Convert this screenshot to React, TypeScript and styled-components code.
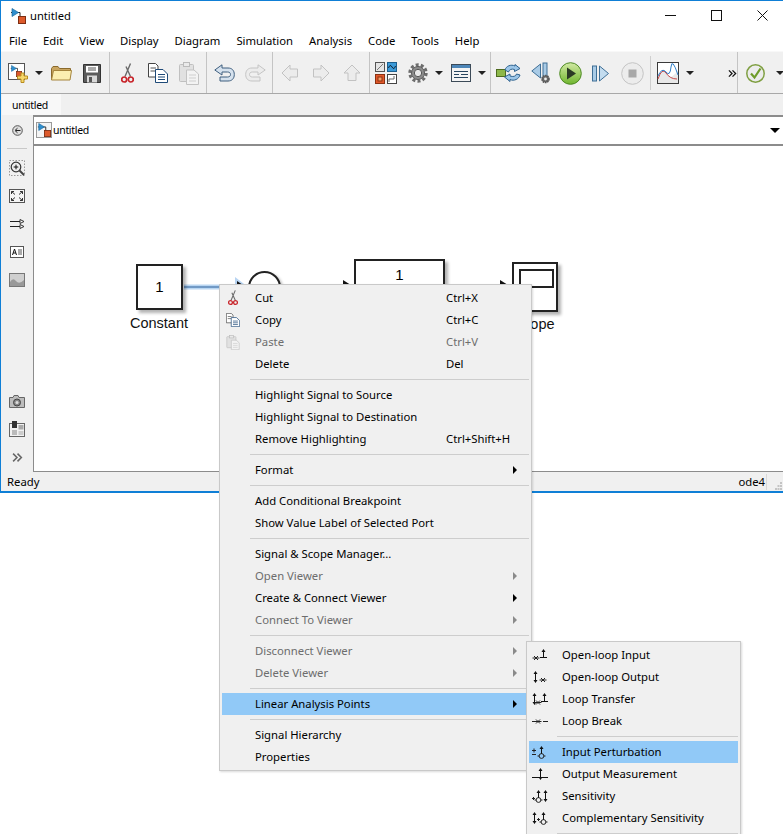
import React from 'react';
import styled, { createGlobalStyle } from 'styled-components';

const GlobalStyle = createGlobalStyle`
  html, body {
    margin: 0;
    padding: 0;
    background: #fff;
  }
  body {
    font-family: "Noto Sans", "Open Sans", sans-serif;
    font-size: 11.3px;
    color: #000;
  }
`;

/* ---------- icons ---------- */

const ModelGlyph = () => (
  <>
    <path d="M1 4.500H10M10 4.500V9" stroke="#222" fill="none" />
    <path d="M2 .5L8.500 4.500L2 8.500Z" fill="#2f8fcf" stroke="#1c6a9e" strokeWidth=".7" />
    <rect x="8.500" y="8.500" width="7" height="7" fill="#dd5a2b" stroke="#7d2d12" />
  </>
);

const ModelIcon = () => (
  <svg width="16" height="16" viewBox="0 0 16 16"><ModelGlyph /></svg>
);

const NewModelIcon = () => (
  <svg width="21" height="21" viewBox="0 0 21 21">
    <rect x=".5" y=".5" width="16" height="16" fill="#fff" stroke="#555" />
    <g transform="translate(2 2) scale(.75)"><ModelGlyph /></g>
    <path d="M13 10h3v3h3.500v3h-3.500v3.500h-3V16H9.500v-3H13Z" fill="#f6d76a" stroke="#b98c1e" />
  </svg>
);

const OpenIcon = () => (
  <svg width="21" height="15" viewBox="0 0 21 15">
    <path d="M.5 14V2.500L2 .5h5l1.500 2H19.500V5" fill="#c9a560" stroke="#8a6a2c" />
    <path d="M.5 14L2.500 4.500H20.500L19 14Z" fill="#fbeeb0" stroke="#a5843c" />
  </svg>
);

const SaveIcon = () => (
  <svg width="18" height="19" viewBox="0 0 18 19">
    <path d="M.5.5H17.500V18.500H.5Z" fill="#5b5b5b" stroke="#333" />
    <rect x="3" y="2" width="12" height="6.500" fill="#fff" />
    <path d="M5 4h8M5 6h8" stroke="#555" />
    <rect x="4" y="11.500" width="10" height="7" fill="#d8d8d8" />
    <rect x="6" y="13" width="3" height="5" fill="#555" />
  </svg>
);

const CutIcon = ({ small }: { small?: boolean }) => (
  <svg width={small ? 10 : 13} height={small ? 16 : 21} viewBox="0 0 13 21">
    <path d="M9.500.5L4 13.500M5 3.500L9.500 13.500" stroke="#6b6b6b" strokeWidth="1.400" fill="none" />
    <circle cx="3.200" cy="16.500" r="2.500" fill="none" stroke="#c8242a" strokeWidth="1.700" />
    <circle cx="9.800" cy="16.500" r="2.500" fill="none" stroke="#c8242a" strokeWidth="1.700" />
  </svg>
);

const CopyIcon = ({ small }: { small?: boolean }) => (
  <svg width={small ? 14 : 20} height={small ? 14 : 20} viewBox="0 0 20 20">
    <path d="M.5.5H7.500L10 3V14H.5Z" fill="#fff" stroke="#444" />
    <path d="M2.500 5H8M2.500 8H8" stroke="#555" />
    <path d="M7.500 6.500H15L19.500 11V19.500H7.500Z" fill="#fff" stroke="#1f4a78" />
    <path d="M10 11.500H17M10 14H17M10 16.500H17" stroke="#1f4a78" />
  </svg>
);

const PasteIcon = ({ small }: { small?: boolean }) => (
  <svg width={small ? 14 : 20} height={small ? 15 : 23} viewBox="0 0 20 23" opacity=".75">
    <rect x=".5" y="2.500" width="14" height="17" rx="1" fill="#dcdcdc" stroke="#b0b0b0" />
    <rect x="4.500" y=".5" width="6" height="4" fill="#e8e8e8" stroke="#aaa" />
    <path d="M7.500 8H15L19.500 12V22.500H7.500Z" fill="#f4f4f4" stroke="#b4b4b4" />
    <path d="M10 13H17M10 16H17M10 19H17" stroke="#c4c4c4" />
  </svg>
);

const UndoIcon = ({ off }: { off?: boolean }) => (
  <svg width="21" height="18" viewBox="0 0 21 18" style={off ? { transform: 'scaleX(-1)' } : undefined}>
    <path
      d="M8 .8L.8 6L8 11V8H13.500C15.500 8 16.500 9 16.500 10.500C16.500 12 15.500 13 13.500 13H6V17H14C18 17 20.300 14.500 20.300 10.500C20.300 6.500 18 4 14 4H8Z"
      fill={off ? '#ececec' : '#d5e1ed'}
      stroke={off ? '#c4c4c4' : '#3f5f7f'}
    />
  </svg>
);

const NavArrow = ({ turn }: { turn: number }) => (
  <svg width="18" height="18" viewBox="0 0 18 18" style={{ transform: `rotate(${turn}deg)` }}>
    <path d="M9 1L1 9H5V16.500H13V9H17Z" fill="#ececec" stroke="#c2c2c2" />
  </svg>
);

const LibraryIcon = () => (
  <svg width="22" height="22" viewBox="0 0 22 22">
    <rect x=".5" y=".5" width="9" height="9" fill="#e4e4e4" stroke="#555" />
    <path d="M2 8L8 2" stroke="#777" />
    <rect x="12.500" y=".5" width="9" height="9" fill="#3a9ad9" stroke="#1c5f8e" />
    <path d="M13.500 6Q15 1.500 17 5T20.500 4" stroke="#123" fill="none" />
    <rect x=".5" y="12.500" width="9" height="9" fill="#e2582a" stroke="#8a3212" />
    <rect x="3" y="15" width="4" height="4" fill="#f4a06a" stroke="#8a3212" />
    <rect x="12.500" y="12.500" width="9" height="9" fill="#fff" stroke="#444" />
    <path d="M14 20V17H19V14" stroke="#666" fill="none" />
  </svg>
);

const GearIcon = () => (
  <svg width="20" height="20" viewBox="0 0 20 20">
    <circle cx="10" cy="10" r="8.200" fill="none" stroke="#6d6d6d" strokeWidth="3" strokeDasharray="3 2.150" />
    <circle cx="10" cy="10" r="6.500" fill="#8e8e8e" stroke="#555" />
    <circle cx="10" cy="10" r="3.700" fill="#e8e8e8" stroke="#555" />
  </svg>
);

const ExplorerIcon = () => (
  <svg width="20" height="18" viewBox="0 0 20 18">
    <rect x=".5" y=".5" width="19" height="17" fill="#f4f4f4" stroke="#3c4a58" />
    <rect x="1" y="1" width="18" height="3" fill="#4d86b8" />
    <path d="M3 7.500H17M3 10.500H8M10 10.500H17M3 13.500H17" stroke="#27455f" />
  </svg>
);

const UpdateIcon = () => (
  <svg width="25" height="18" viewBox="0 0 25 18">
    <rect x=".5" y="5.500" width="9" height="7" fill="#8db84a" stroke="#4e6b1f" />
    <path d="M9 6C10 2 15 0 19 2V.5L24 4.500L18.500 7.500V5.500C16 4.500 13 5.500 12.500 8Z" fill="#9cc6e8" stroke="#2d628f" />
    <path d="M24 11C23 15 18 17.500 14 15.500V17.500L8.500 13L14 10V12C17 13 20 12.500 20.500 10Z" fill="#9cc6e8" stroke="#2d628f" />
  </svg>
);

const StepBackIcon = () => (
  <svg width="20" height="22" viewBox="0 0 20 22">
    <path d="M9.500 2V16L.8 9Z" fill="#a9cbe6" stroke="#3f6f96" />
    <rect x="12" y="1" width="4" height="14" fill="#a9cbe6" stroke="#3f6f96" />
    <circle cx="14.500" cy="17" r="3.600" fill="#666" stroke="#555" strokeDasharray="1.500 .8" strokeWidth="1.400" />
    <circle cx="14.500" cy="17" r="1.400" fill="#eee" />
  </svg>
);

const PlayIcon = () => (
  <svg width="23" height="23" viewBox="0 0 23 23">
    <defs>
      <linearGradient id="playFill" x1="0" y1="0" x2="0" y2="1">
        <stop offset="0" stopColor="#d3eaa5" />
        <stop offset="1" stopColor="#6fb52e" />
      </linearGradient>
    </defs>
    <circle cx="11.500" cy="11.500" r="10.800" fill="url(#playFill)" stroke="#4e8a25" />
    <path d="M8 5.500L17 11.500L8 17.500Z" fill="#2b3a25" />
  </svg>
);

const StepForwardIcon = () => (
  <svg width="17" height="17" viewBox="0 0 17 17">
    <rect x=".5" y="1" width="4" height="15" fill="#a9cbe6" stroke="#3f6f96" />
    <path d="M7.500 1V16L16.500 8.500Z" fill="#c3dcef" stroke="#3f6f96" />
  </svg>
);

const StopIcon = () => (
  <svg width="23" height="23" viewBox="0 0 23 23">
    <circle cx="11.500" cy="11.500" r="10.800" fill="#ececec" stroke="#c4c4c4" />
    <rect x="7.500" y="7.500" width="8" height="8" fill="#a8a8a8" />
  </svg>
);

const ScopeIcon = () => (
  <svg width="22" height="22" viewBox="0 0 22 22">
    <rect x=".5" y=".5" width="21" height="21" fill="#fff" stroke="#3a3a3a" />
    <path d="M1 16Q5 5 9 10T14 15T21 9V21H1Z" fill="#e8e8e8" />
    <path d="M1 17Q5 5 9 11T20 17" fill="none" stroke="#c84a4a" />
    <path d="M1 14Q5 5 9 10T14 5T21 13" fill="none" stroke="#2f7fc9" />
  </svg>
);

const CheckIcon = () => (
  <svg width="19" height="19" viewBox="0 0 19 19">
    <circle cx="9.500" cy="9.500" r="8.700" fill="#ececec" stroke="#7f9f42" strokeWidth="1.500" />
    <path d="M5 9.500L8.500 13.500L14.500 4.500" fill="none" stroke="#6e9c2a" strokeWidth="2.200" />
  </svg>
);

const ChevronsIcon = ({ color, size }: { color: string; size: number }) => (
  <svg width={size} height={size} viewBox="0 0 10 10">
    <path d="M1 1.500L4.500 5L1 8.500M5 1.500L8.500 5L5 8.500" fill="none" stroke={color} strokeWidth="1.400" />
  </svg>
);

const BackCircleIcon = () => (
  <svg width="11" height="11" viewBox="0 0 11 11">
    <circle cx="5.500" cy="5.500" r="4.800" fill="#ddd" stroke="#555" />
    <path d="M8.500 5.500H4M5.500 3.200L3 5.500L5.500 7.800" fill="none" stroke="#222" />
  </svg>
);

const ZoomIcon = () => (
  <svg width="16" height="16" viewBox="0 0 16 16">
    <rect x=".5" y=".5" width="15" height="15" fill="none" stroke="#999" strokeDasharray="1.500 1.500" />
    <circle cx="7" cy="7" r="4.800" fill="#eee" stroke="#333" strokeWidth="1.200" />
    <path d="M4.700 7H9.300M7 4.700V9.300" stroke="#111" />
    <path d="M10.500 10.500L15 15" stroke="#444" strokeWidth="2" />
  </svg>
);

const FitIcon = () => (
  <svg width="16" height="14" viewBox="0 0 16 14">
    <rect x=".5" y=".5" width="15" height="13" fill="#f4f4f4" stroke="#555" />
    <path d="M2.500 2.500L6 5.500M2.500 2.500H5M2.500 2.500V5M13.500 2.500L10 5.500M13.500 2.500H11M13.500 2.500V5M2.500 11.500L6 8.500M2.500 11.500H5M2.500 11.500V9M13.500 11.500L10 8.500M13.500 11.500H11M13.500 11.500V9" stroke="#333" fill="none" />
  </svg>
);

const PortsIcon = () => (
  <svg width="15" height="10" viewBox="0 0 15 10">
    <path d="M0 2.500H10M0 7.500H10" stroke="#222" />
    <path d="M10 .5L14 2.500L10 4.500ZM10 5.500L14 7.500L10 9.500Z" fill="#fff" stroke="#333" />
  </svg>
);

const AnnotationIcon = () => (
  <svg width="14" height="12" viewBox="0 0 14 12">
    <rect x=".5" y=".5" width="13" height="11" fill="#fff" stroke="#555" />
    <path d="M2.500 9L4.500 3L6.500 9M3.200 7H5.800" fill="none" stroke="#111" />
    <path d="M8 4H12M8 6H12M8 8H12" stroke="#555" />
  </svg>
);

const ImageIcon = () => (
  <svg width="16" height="14" viewBox="0 0 16 14">
    <rect x=".5" y=".5" width="15" height="13" fill="#cfcfcf" stroke="#777" />
    <path d="M1 9Q4 4 7 8T15 7V13H1Z" fill="#999" />
  </svg>
);

const CameraIcon = () => (
  <svg width="16" height="13" viewBox="0 0 16 13">
    <path d="M.5 2.500H4L5 .5H9L10 2.500H15.500V12.500H.5Z" fill="#bdbdbd" stroke="#666" />
    <circle cx="8" cy="7.500" r="3.500" fill="#888" stroke="#444" />
    <circle cx="8" cy="7.500" r="1.500" fill="#ddd" />
  </svg>
);

const PropsIcon = () => (
  <svg width="16" height="16" viewBox="0 0 16 16">
    <rect x=".5" y="2.500" width="15" height="13" fill="#f2f2f2" stroke="#666" />
    <rect x="3" y="0" width="5" height="7" fill="#333" />
    <rect x="3" y="9" width="5" height="5" fill="#bbb" />
    <rect x="9.500" y="4" width="5" height="4.500" fill="#aaa" />
    <rect x="9.500" y="10" width="5" height="4" fill="#ccc" />
  </svg>
);

/* little signal glyphs of the Linear Analysis Points submenu */
const Cross = ({ x, y }: { x: number; y: number }) => (
  <path d={`M${x - 3.500} ${y}h7M${x - 2} ${y - 2}l4 4M${x + 2} ${y - 2}l-4 4`} stroke="#222" fill="none" />
);
const ArrowTee = ({ x }: { x: number }) => (
  <>
    <path d={`M${x - 3.500} 9.500h7M${x} 3v7`} stroke="#111" fill="none" />
    <path d={`M${x - 2} 4L${x} 1L${x + 2} 4Z`} fill="#111" />
  </>
);
const UpDown = ({ x }: { x: number }) => (
  <>
    <path d={`M${x} 3v8`} stroke="#111" />
    <path d={`M${x - 2} 4L${x} 1L${x + 2} 4ZM${x - 2} 10L${x} 13L${x + 2} 10Z`} fill="#111" />
  </>
);
const SumMark = ({ x }: { x: number }) => (
  <>
    <path d={`M${x} 3v6`} stroke="#111" />
    <path d={`M${x - 2} 4L${x} 1L${x + 2} 4Z`} fill="#111" />
    <circle cx={x} cy="11" r="2.400" fill="none" stroke="#222" />
    <path d={`M${x - 4} 11h1.500M${x + 2.500} 11h1.500`} stroke="#222" />
  </>
);

const POINT_ICONS: Record<string, React.ReactNode> = {
  input: (<><Cross x={4} y={10} /><ArrowTee x={11.500} /></>),
  output: (<><UpDown x={3.500} /><Cross x={11} y={10} /></>),
  transfer: (<><UpDown x={2.500} /><Cross x={6} y={10.500} /><ArrowTee x={12.500} /></>),
  loopBreak: (<><path d="M0 7.500H3M11 7.500H16" stroke="#222" /><Cross x={6} y={7.500} /></>),
  perturb: (<><path d="M0 5.500h4M2 3.500v4M0 9.500h4" stroke="#222" /><SumMark x={9.500} /></>),
  measure: (<><path d="M0 10.500H16" stroke="#111" /><UpDown x={8.500} /></>),
  sensitivity: (<><path d="M0 9.500h3M1.500 8v3" stroke="#222" /><SumMark x={6.500} /><UpDown x={13.500} /></>),
  complementary: (<><UpDown x={2.500} /><path d="M5 8.500h3M6.500 7v3" stroke="#222" /><SumMark x={11.500} /></>),
};

const PointIcon = ({ name }: { name: string }) => (
  <svg width="16" height="14" viewBox="0 0 16 14">{POINT_ICONS[name]}</svg>
);

/* ---------- window chrome ---------- */

const Page = styled.div`
  position: relative;
  width: 783px;
  height: 834px;
  overflow: hidden;
  background: #fff;
`;

const Window = styled.div`
  width: 783px;
  height: 493px;
  box-sizing: border-box;
  border-top: 1px solid #0f7fd6;
  border-left: 1px solid #0f7fd6;
  border-bottom: 2px solid #0f7fd6;
  display: flex;
  flex-direction: column;
`;

const TitleBar = styled.div`
  height: 29px;
  display: flex;
  align-items: center;
  padding: 0 0 0 9px;
  margin-right: -2px;
  background: #fff;
`;

const TitleText = styled.span`
  flex: 1;
  margin-left: 4px;
  font-size: 11.2px;
`;

const WinButton = styled.div`
  width: 46px;
  height: 29px;
  display: flex;
  align-items: center;
  justify-content: center;
`;

const MenuBar = styled.div`
  height: 21px;
  display: flex;
  align-items: center;
  padding-left: 8px;
  gap: 16px;
  background: #fff;
`;

const Toolbar = styled.div`
  height: 40px;
  padding-top: 1px;
  flex: none;
  display: flex;
  background: #f0f0f0;
  border-top: 1px solid #f8f8f8;
  border-bottom: 1px solid #a8a8a8;
`;

const ToolGroup = styled.div<{ $width: number }>`
  width: ${(p) => p.$width}px;
  flex: none;
  display: flex;
  align-items: center;
  margin-top: -1px;
  padding-top: 1px;
  border-right: 1px solid #c4c4c4;
  box-sizing: content-box;
`;

const Tool = styled.div<{ $width: number }>`
  width: ${(p) => p.$width}px;
  flex: none;
  height: 100%;
  display: flex;
  align-items: center;
  justify-content: center;
`;

const InnerDivider = styled.div`
  width: 1px;
  height: 34px;
  background: #cfcfcf;
  flex: none;
`;

const DropArrow = styled.div`
  width: 0;
  height: 0;
  border-left: 4px solid transparent;
  border-right: 4px solid transparent;
  border-top: 4px solid #222;
`;

const TabRow = styled.div`
  height: 21px;
  flex: none;
  background: #f0f0f0;
  display: flex;
`;

const Tab = styled.div`
  width: 59px;
  margin-left: 1px;
  padding-left: 10px;
  box-sizing: border-box;
  background: #f8f8f8;
  display: flex;
  align-items: center;
  font-size: 10.5px;
  letter-spacing: -0.3px;
`;

const Body = styled.div`
  flex: 1;
  display: flex;
  min-height: 0;
`;

const SideBar = styled.div`
  width: 32px;
  flex: none;
  background: #f0f0f0;
  display: flex;
  flex-direction: column;
  align-items: center;
  padding: 1px 0;
  box-sizing: border-box;
`;

const SideButton = styled.div`
  width: 32px;
  height: 28px;
  flex: none;
  display: flex;
  align-items: center;
  justify-content: center;
`;

const SideDivider = styled.div`
  width: 20px;
  height: 1px;
  flex: none;
  margin: 4px 0 5px;
  background: #c8c8c8;
`;

const SideSpacer = styled.div`
  flex: 1;
`;

const Main = styled.div`
  flex: 1;
  min-width: 0;
  display: flex;
  flex-direction: column;
  border-left: 1px solid #8c8c8c;
  border-bottom: 1px solid #8c8c8c;
`;

const AddressBar = styled.div`
  height: 26px;
  flex: none;
  display: flex;
  align-items: center;
  padding: 0 3px 1px 2px;
  gap: 1px;
  background: #fff;
  border-top: 2px solid #8c8c8c;
  border-bottom: 2px solid #8c8c8c;
`;

const AddressIcon = styled.div`
  width: 16px;
  height: 16px;
  box-sizing: border-box;
  display: flex;
  border: 1px solid #9a9a9a;
  background: #f4f4f4;

  svg {
    width: 14px;
    height: 14px;
  }
`;

const AddressText = styled.span`
  flex: 1;
  font-size: 10.5px;
  letter-spacing: -0.3px;
`;

const AddressArrow = styled.div`
  width: 0;
  height: 0;
  border-left: 5px solid transparent;
  border-right: 5px solid transparent;
  border-top: 5px solid #000;
`;

const StatusBar = styled.div`
  height: 19px;
  flex: none;
  display: flex;
  align-items: center;
  background: #f0f0f0;
  padding-left: 6px;
`;

const StatusText = styled.span`
  flex: 1;
`;

const StatusCell = styled.span`
  padding-right: 1px;
  border-right: 1px solid #d8d8d8;
  line-height: 16px;
`;

const Grip = styled.div`
  width: 16px;
  height: 17px;
  flex: none;
  display: flex;
  justify-content: flex-end;
  align-items: flex-end;
`;

/* ---------- model canvas ---------- */

const Canvas = styled.div`
  position: relative;
  flex: 1;
  background: #fff;
  font-family: "Liberation Sans", Arial, sans-serif;
`;

const Wires = styled.svg`
  position: absolute;
  left: 0;
  top: 0;
`;

const Block = styled.div<{ $x: number; $y: number; $w: number; $h: number; $top?: boolean }>`
  position: absolute;
  left: ${(p) => p.$x}px;
  top: ${(p) => p.$y}px;
  width: ${(p) => p.$w}px;
  height: ${(p) => p.$h}px;
  box-sizing: border-box;
  border: 2px solid #222;
  background: #fff;
  box-shadow: 3px 3px 3px rgba(0, 0, 0, 0.3);
  display: flex;
  justify-content: center;
  align-items: ${(p) => (p.$top ? 'flex-start' : 'center')};
  padding-top: ${(p) => (p.$top ? 5 : 0)}px;
  font-size: 15px;
  line-height: 18px;
`;

const ScopeScreen = styled.div`
  position: absolute;
  left: 5px;
  top: 5px;
  width: 35px;
  height: 19px;
  box-sizing: border-box;
  border: 2px solid #222;
`;

const SumCircle = styled.div`
  position: absolute;
  left: 214px;
  top: 125px;
  width: 33px;
  height: 33px;
  box-sizing: border-box;
  border: 2px solid #222;
  border-radius: 50%;
  background: #fff;
  box-shadow: 2px 2px 3px rgba(0, 0, 0, 0.3);
`;

const BlockLabel = styled.div<{ $x: number; $y: number }>`
  position: absolute;
  left: ${(p) => p.$x}px;
  top: ${(p) => p.$y}px;
  width: 80px;
  text-align: center;
  font-size: 14.500px;
  line-height: 18px;
  color: #111;
`;

/* ---------- context menus ---------- */

const PopupMenu = styled.div<{ $x: number; $y: number; $w: number }>`
  position: absolute;
  left: ${(p) => p.$x}px;
  top: ${(p) => p.$y}px;
  width: ${(p) => p.$w}px;
  box-sizing: border-box;
  padding: 2px;
  background: #f0f0f0;
  border: 1px solid #c9c9c9;
  box-shadow: 1px 1px 2px rgba(0, 0, 0, 0.15);
`;

const MenuRow = styled.div<{ $active?: boolean; $off?: boolean; $indent: number }>`
  position: relative;
  height: 22px;
  box-sizing: border-box;
  display: flex;
  align-items: center;
  padding: 0 0 2px ${(p) => p.$indent}px;
  color: ${(p) => (p.$off ? '#6d6d6d' : '#000')};
  background: ${(p) => (p.$active ? '#91c9f7' : 'transparent')};
`;

const MenuIcon = styled.div`
  position: absolute;
  left: 0;
  top: 0;
  width: 22px;
  height: 22px;
  display: flex;
  align-items: center;
  justify-content: center;
`;

const MenuLabel = styled.span`
  width: 191px;
  flex: none;
  white-space: nowrap;
`;

const SubArrow = styled.div<{ $off?: boolean }>`
  position: absolute;
  right: 12px;
  top: 7px;
  width: 0;
  height: 0;
  border-top: 4px solid transparent;
  border-bottom: 4px solid transparent;
  border-left: 4px solid ${(p) => (p.$off ? '#8a8a8a' : '#000')};
`;

const MenuSeparator = styled.div<{ $indent: number }>`
  height: 1px;
  margin: 4px 0 4px ${(p) => p.$indent}px;
  background: #cdcdcd;
`;

type Item = {
  label?: string;
  shortcut?: string;
  off?: boolean;
  sub?: boolean;
  active?: boolean;
  icon?: React.ReactNode;
};

const CONTEXT_ITEMS: Item[] = [
  { label: 'Cut', shortcut: 'Ctrl+X', icon: <CutIcon small /> },
  { label: 'Copy', shortcut: 'Ctrl+C', icon: <CopyIcon small /> },
  { label: 'Paste', shortcut: 'Ctrl+V', off: true, icon: <PasteIcon small /> },
  { label: 'Delete', shortcut: 'Del' },
  {},
  { label: 'Highlight Signal to Source' },
  { label: 'Highlight Signal to Destination' },
  { label: 'Remove Highlighting', shortcut: 'Ctrl+Shift+H' },
  {},
  { label: 'Format', sub: true },
  {},
  { label: 'Add Conditional Breakpoint' },
  { label: 'Show Value Label of Selected Port' },
  {},
  { label: 'Signal & Scope Manager...' },
  { label: 'Open Viewer', off: true, sub: true },
  { label: 'Create & Connect Viewer', sub: true },
  { label: 'Connect To Viewer', off: true, sub: true },
  {},
  { label: 'Disconnect Viewer', off: true, sub: true },
  { label: 'Delete Viewer', off: true, sub: true },
  {},
  { label: 'Linear Analysis Points', sub: true, active: true },
  {},
  { label: 'Signal Hierarchy' },
  { label: 'Properties' },
];

const POINT_ITEMS: Item[] = [
  { label: 'Open-loop Input', icon: <PointIcon name="input" /> },
  { label: 'Open-loop Output', icon: <PointIcon name="output" /> },
  { label: 'Loop Transfer', icon: <PointIcon name="transfer" /> },
  { label: 'Loop Break', icon: <PointIcon name="loopBreak" /> },
  {},
  { label: 'Input Perturbation', active: true, icon: <PointIcon name="perturb" /> },
  { label: 'Output Measurement', icon: <PointIcon name="measure" /> },
  { label: 'Sensitivity', icon: <PointIcon name="sensitivity" /> },
  { label: 'Complementary Sensitivity', icon: <PointIcon name="complementary" /> },
  {},
];

const MENU_BAR = ['File', 'Edit', 'View', 'Display', 'Diagram', 'Simulation', 'Analysis', 'Code', 'Tools', 'Help'];

const MenuItems = ({ items, indent }: { items: Item[]; indent: number }) => (
  <>
    {items.map((item, i) =>
      item.label ? (
        <MenuRow key={i} $active={item.active} $off={item.off} $indent={indent}>
          {item.icon && <MenuIcon>{item.icon}</MenuIcon>}
          <MenuLabel>{item.label}</MenuLabel>
          {item.shortcut && <span>{item.shortcut}</span>}
          {item.sub && <SubArrow $off={item.off} />}
        </MenuRow>
      ) : (
        <MenuSeparator key={i} $indent={indent - 5} />
      )
    )}
  </>
);

export default function App() {
  return (
    <Page>
      <GlobalStyle />
      <Window>
        <TitleBar>
          <ModelIcon />
          <TitleText>untitled</TitleText>
          <WinButton>
            <svg width="11" height="11" viewBox="0 0 11 11"><path d="M0 5.500H11" stroke="#111" /></svg>
          </WinButton>
          <WinButton>
            <svg width="11" height="11" viewBox="0 0 11 11"><rect x=".5" y=".5" width="10" height="10" fill="none" stroke="#111" /></svg>
          </WinButton>
          <WinButton>
            <svg width="11" height="11" viewBox="0 0 11 11"><path d="M.5.5L10.500 10.500M10.500.5L.5 10.500" stroke="#111" /></svg>
          </WinButton>
        </TitleBar>
        <MenuBar>
          {MENU_BAR.map((m) => <span key={m}>{m}</span>)}
        </MenuBar>
        <Toolbar>
          <ToolGroup $width={108}>
            <Tool $width={34}><NewModelIcon /></Tool>
            <Tool $width={8}><DropArrow /></Tool>
            <Tool $width={36}><OpenIcon /></Tool>
            <Tool $width={26}><SaveIcon /></Tool>
          </ToolGroup>
          <ToolGroup $width={96}>
            <Tool $width={34}><CutIcon /></Tool>
            <Tool $width={28}><CopyIcon /></Tool>
            <Tool $width={34}><PasteIcon /></Tool>
          </ToolGroup>
          <ToolGroup $width={65}>
            <Tool $width={34}><UndoIcon /></Tool>
            <Tool $width={28}><UndoIcon off /></Tool>
          </ToolGroup>
          <ToolGroup $width={96}>
            <Tool $width={34}><NavArrow turn={-90} /></Tool>
            <Tool $width={28}><NavArrow turn={90} /></Tool>
            <Tool $width={34}><NavArrow turn={0} /></Tool>
          </ToolGroup>
          <ToolGroup $width={120}>
            <Tool $width={32}><LibraryIcon /></Tool>
            <Tool $width={32}><GearIcon /></Tool>
            <Tool $width={10}><DropArrow /></Tool>
            <Tool $width={34}><ExplorerIcon /></Tool>
            <Tool $width={8}><DropArrow /></Tool>
          </ToolGroup>
          <ToolGroup $width={246}>
            <Tool $width={34}><UpdateIcon /></Tool>
            <Tool $width={32}><StepBackIcon /></Tool>
            <Tool $width={26}><PlayIcon /></Tool>
            <Tool $width={34}><StepForwardIcon /></Tool>
            <Tool $width={30}><StopIcon /></Tool>
            <Tool $width={3} />
            <InnerDivider />
            <Tool $width={34}><ScopeIcon /></Tool>
            <Tool $width={1} />
            <Tool $width={8}><DropArrow /></Tool>
            <Tool $width={33} />
            <Tool $width={10}><ChevronsIcon color="#111" size={9} /></Tool>
          </ToolGroup>
          <Tool $width={34}><CheckIcon /></Tool>
          <Tool $width={4} />
          <Tool $width={8}><DropArrow /></Tool>
        </Toolbar>
        <TabRow>
          <Tab>untitled</Tab>
        </TabRow>
        <Body>
          <SideBar>
            <SideButton><BackCircleIcon /></SideButton>
            <SideDivider />
            <SideButton><ZoomIcon /></SideButton>
            <SideButton><FitIcon /></SideButton>
            <SideButton><PortsIcon /></SideButton>
            <SideButton><AnnotationIcon /></SideButton>
            <SideButton><ImageIcon /></SideButton>
            <SideSpacer />
            <SideButton><CameraIcon /></SideButton>
            <SideButton><PropsIcon /></SideButton>
            <SideButton><ChevronsIcon color="#666" size={11} /></SideButton>
          </SideBar>
          <Main>
            <AddressBar>
              <AddressIcon><ModelIcon /></AddressIcon>
              <AddressText>untitled</AddressText>
              <AddressArrow />
            </AddressBar>
            <Canvas>
              <Wires width="749" height="325">
                <path d="M150 141H206" stroke="#b9d6f2" strokeWidth="5" />
                <path d="M150 141H206" stroke="#2a5f9a" />
                <path d="M201 131L214 141L201 151Z" fill="#b8d4f2" />
                <path d="M203 135L212 141L203 147Z" fill="#111" />
                <path d="M309 134L320 141L309 148Z" fill="#111" />
                <path d="M466 134L477 141L466 148Z" fill="#111" />
              </Wires>
              <Block $x={102} $y={118} $w={47} $h={46}>1</Block>
              <BlockLabel $x={85} $y={168}>Constant</BlockLabel>
              <SumCircle />
              <Block $x={320} $y={113} $w={91} $h={60} $top>1</Block>
              <Block $x={478} $y={116} $w={46} $h={50}><ScopeScreen /></Block>
              <BlockLabel $x={460} $y={169}>Scope</BlockLabel>
            </Canvas>
          </Main>
        </Body>
        <StatusBar>
          <StatusText>Ready</StatusText>
          <StatusCell>ode4</StatusCell>
          <Grip>
            <svg width="8" height="8" viewBox="0 0 8 8">
              <path d="M5 0h2v2H5ZM2.500 3h2v2h-2ZM5 3h2v2H5ZM0 6h2v2H0ZM2.500 6h2v2h-2ZM5 6h2v2H5Z" fill="#c4c4c4" />
            </svg>
          </Grip>
        </StatusBar>
      </Window>
      <PopupMenu $x={219} $y={284} $w={313}>
        <MenuItems items={CONTEXT_ITEMS} indent={33} />
      </PopupMenu>
      <PopupMenu $x={526} $y={641} $w={215}>
        <MenuItems items={POINT_ITEMS} indent={33} />
      </PopupMenu>
    </Page>
  );
}
